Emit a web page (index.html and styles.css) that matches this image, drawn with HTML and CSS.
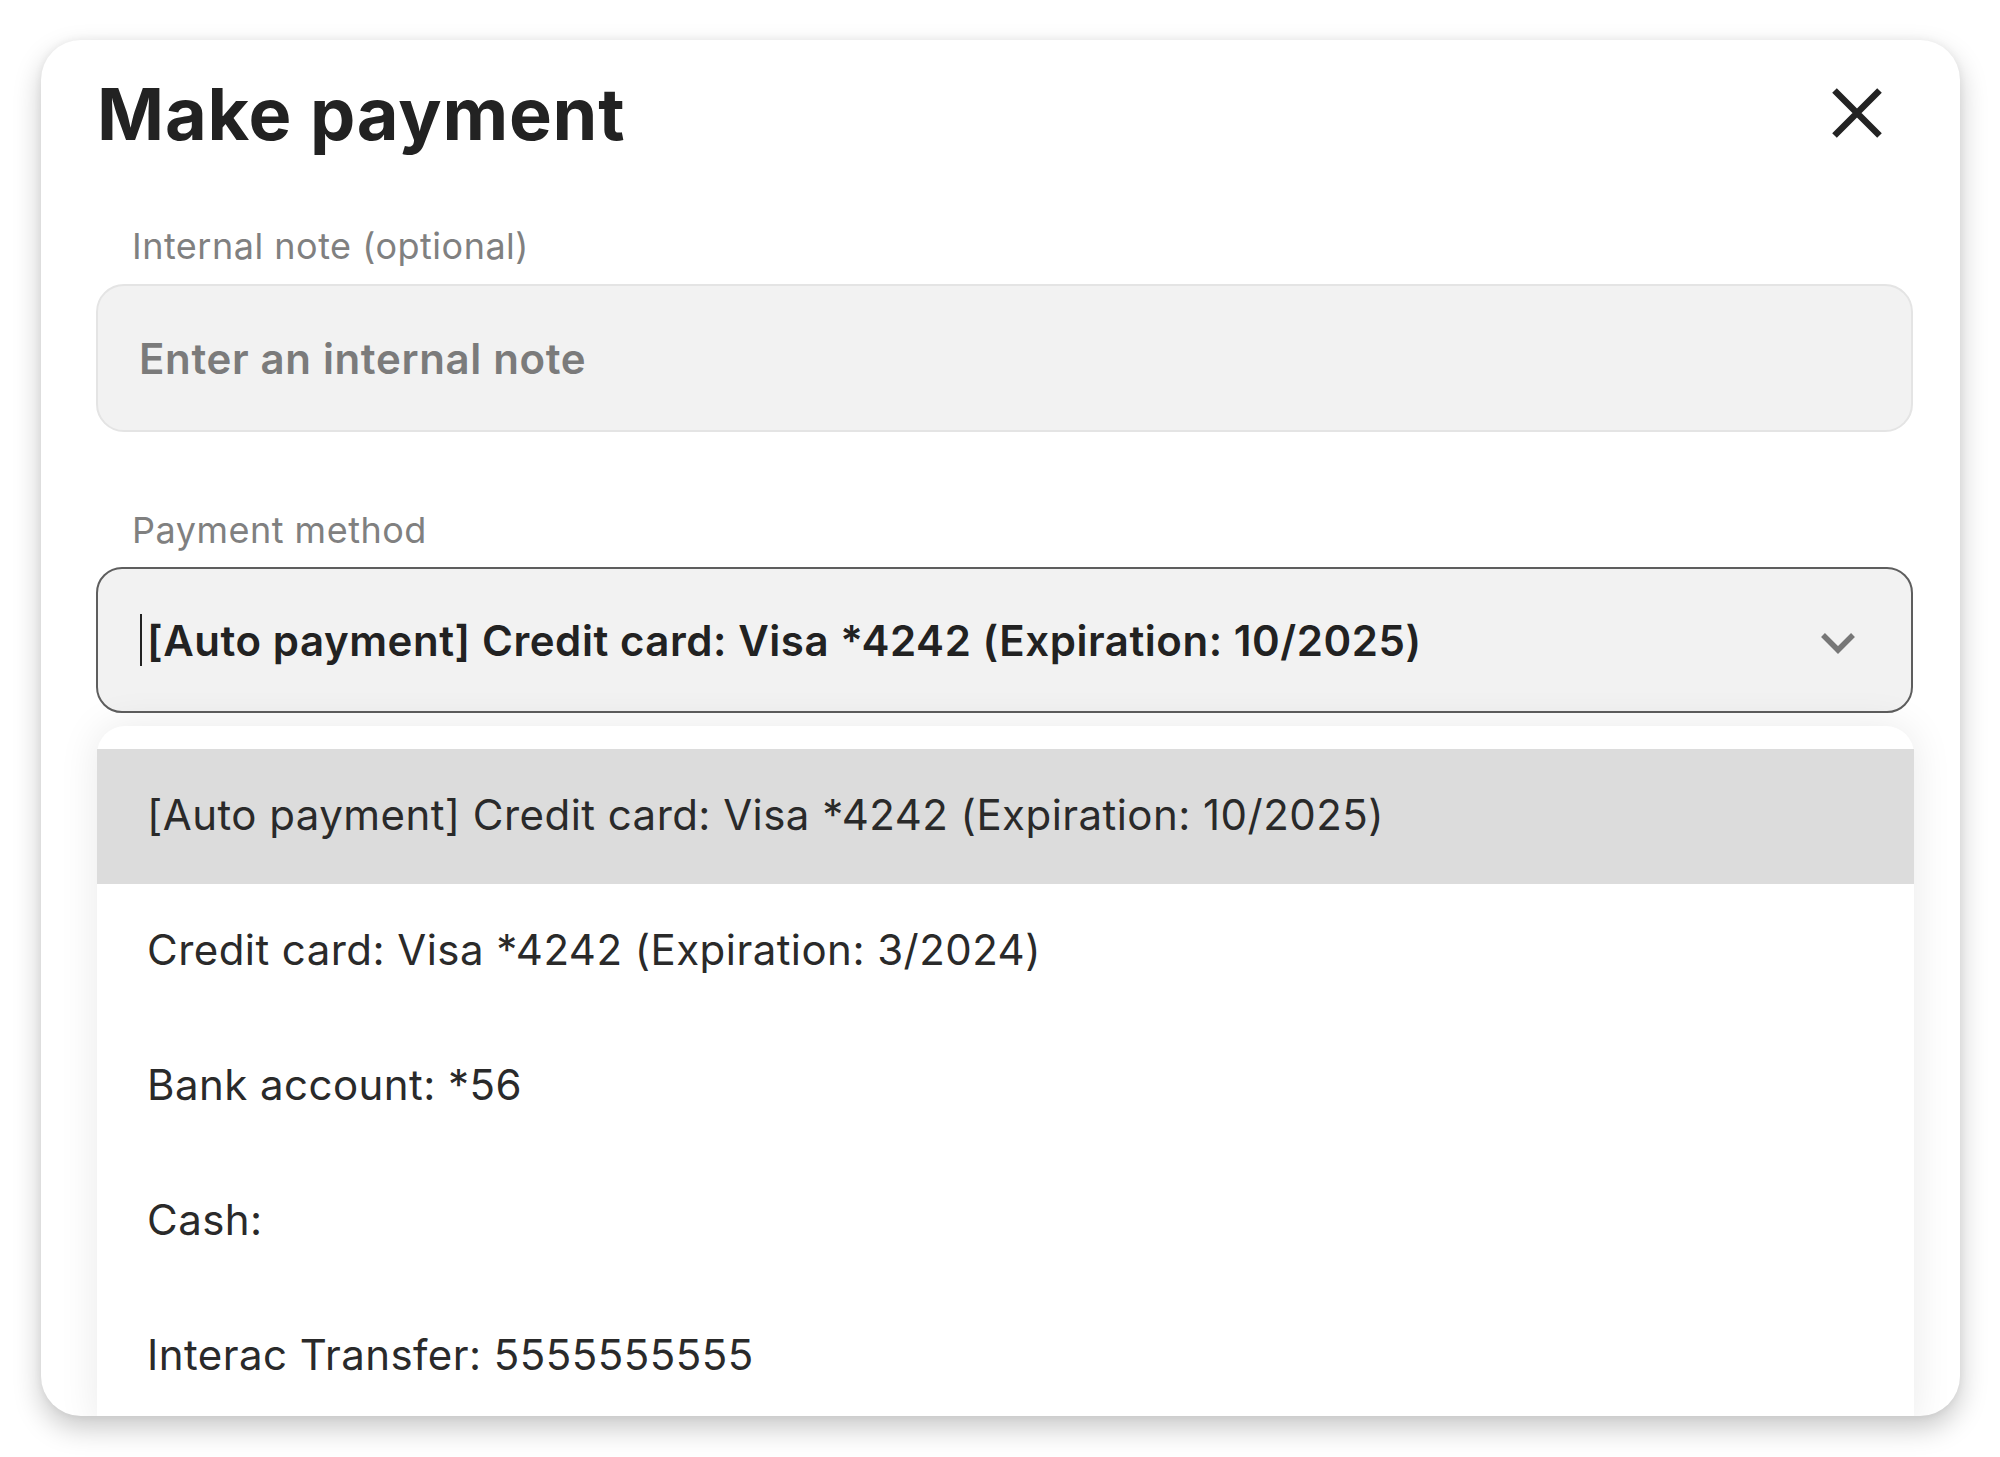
FILE: index.html
```html
<!DOCTYPE html>
<html lang="en">
<head>
<meta charset="utf-8">
<title>Make payment</title>
<link rel="stylesheet" href="styles.css">
</head>
<body>
<div class="modal">
  <header class="modal-header">
    <h1 class="modal-title">Make payment</h1>
    <button class="close-btn" aria-label="Close">
      <svg width="50" height="50" viewBox="0 0 50 50"><path d="M2.5 2.5 L47.5 47.5 M47.5 2.5 L2.5 47.5" fill="none" stroke="currentColor" stroke-width="6.5"/></svg>
    </button>
  </header>

  <div class="field">
    <label class="field-label">Internal note (optional)</label>
    <div class="text-input"><span class="placeholder">Enter an internal note</span></div>
  </div>

  <div class="field field-select">
    <label class="field-label">Payment method</label>
    <div class="select-wrap">
      <div class="select">
        <span class="caret"></span>
        <span class="select-value">[Auto payment] Credit card: Visa *4242 (Expiration: 10/2025)</span>
        <svg class="chevron" width="36" height="22" viewBox="0 0 36 22"><path d="M3 3 L18 18 L33 3" fill="none" stroke="currentColor" stroke-width="5.5"/></svg>
      </div>
      <ul class="dropdown">
        <li class="option option-active">[Auto payment] Credit card: Visa *4242 (Expiration: 10/2025)</li>
        <li class="option">Credit card: Visa *4242 (Expiration: 3/2024)</li>
        <li class="option">Bank account: *56</li>
        <li class="option">Cash:</li>
        <li class="option">Interac Transfer: 5555555555</li>
      </ul>
    </div>
  </div>
</div>
</body>
</html>
```

FILE: styles.css
```css
html, body {
  margin: 0;
  padding: 0;
}

body {
  width: 2000px;
  height: 1457px;
  overflow: hidden;
  background: #ffffff;
  font-family: Inter, "Noto Sans", sans-serif;
  color: #222222;
  box-sizing: border-box;
  padding: 40px 0 0 41px;
}

.modal {
  width: 1919px;
  height: 1376px;
  box-sizing: border-box;
  background: #ffffff;
  border-radius: 40px;
  overflow: hidden;
  padding: 30px 47px 0 55px;
  box-shadow: 0 12px 28px rgba(0, 0, 0, 0.22), 0 0 8px rgba(0, 0, 0, 0.06);
}

.modal-header {
  display: flex;
  align-items: center;
  justify-content: space-between;
  height: 88px;
}

.modal-title {
  margin: 0 0 0 1px;
  font-size: 72px;
  line-height: 88px;
  font-weight: 700;
  color: #222222;
  letter-spacing: 0.8px;
}

.close-btn {
  display: flex;
  align-items: center;
  justify-content: center;
  width: 50px;
  height: 50px;
  padding: 0;
  margin: -2px 31px 0 0;
  border: none;
  background: none;
  color: #232323;
}

.field {
  margin-top: 66px;
}

.field-select {
  margin-top: 76px;
}

.field-label {
  display: block;
  font-size: 36px;
  line-height: 44px;
  color: #808080;
  padding-left: 36px;
  margin-bottom: 16px;
  letter-spacing: 0.5px;
}

.field-select .field-label {
  margin-bottom: 15px;
}

.text-input {
  height: 148px;
  box-sizing: border-box;
  border: 2px solid #e4e4e4;
  border-radius: 28px;
  background: #f2f2f2;
  display: flex;
  align-items: center;
  padding-left: 41px;
}

.placeholder {
  font-size: 42px;
  font-weight: 600;
  color: #7b7b7b;
  letter-spacing: 0.65px;
}

.select-wrap {
  position: relative;
}

.select {
  height: 146px;
  box-sizing: border-box;
  border: 2px solid #5e5e5e;
  border-radius: 26px;
  background: #f2f2f2;
  display: flex;
  align-items: center;
  padding-left: 42px;
  padding-right: 55px;
}

.caret {
  width: 2px;
  height: 52px;
  background: #222222;
  margin-right: 5px;
  flex: none;
}

.select-value {
  flex: 1;
  font-size: 42px;
  font-weight: 600;
  color: #222222;
  white-space: nowrap;
  letter-spacing: 0.55px;
}

.chevron {
  flex: none;
  color: #777777;
  margin-top: 6px;
}

.dropdown {
  position: absolute;
  top: calc(100% + 13px);
  left: 1px;
  right: -1px;
  margin: 0;
  padding: 23px 0 0;
  list-style: none;
  background: #ffffff;
  border-radius: 28px 28px 0 0;
  box-shadow: 0 0 40px rgba(0, 0, 0, 0.09);
}

.option {
  height: 135px;
  box-sizing: border-box;
  display: flex;
  align-items: center;
  padding-left: 50px;
  padding-bottom: 4px;
  font-size: 42px;
  font-weight: 400;
  color: #2a2a2a;
  white-space: nowrap;
  letter-spacing: 0.45px;
}

.option-active {
  background: #dcdcdc;
}
```
